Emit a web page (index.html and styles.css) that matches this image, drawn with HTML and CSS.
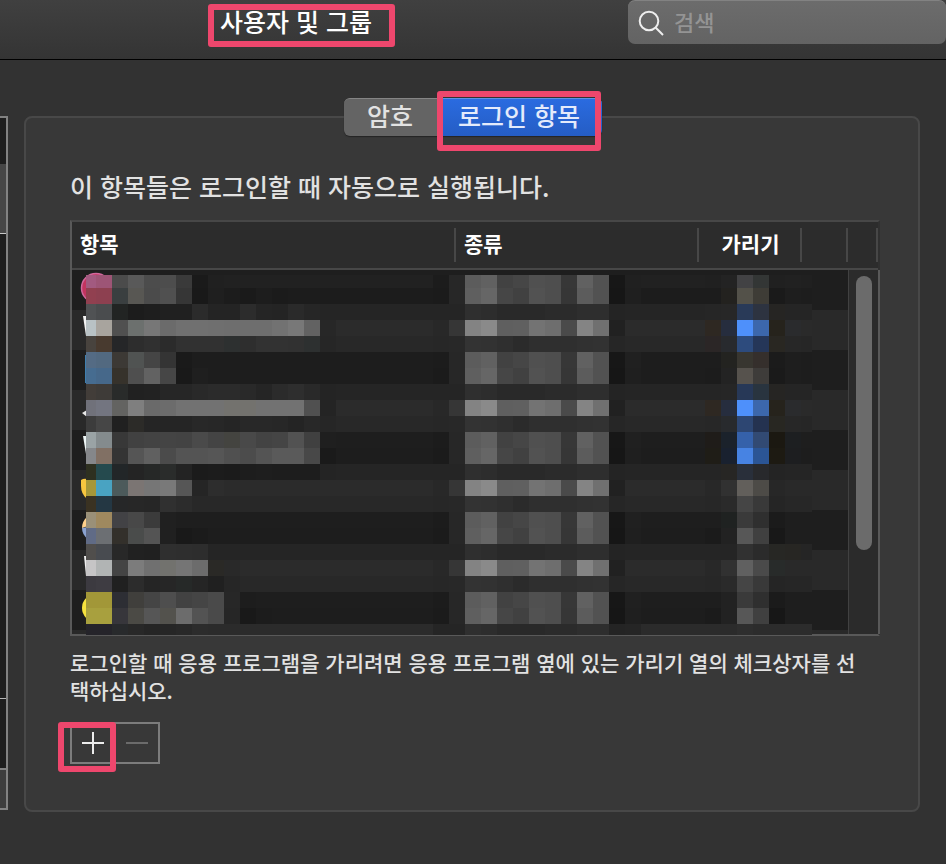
FILE: index.html
```html
<!DOCTYPE html>
<html lang="ko">
<head>
<meta charset="utf-8">
<title>사용자 및 그룹</title>
<link rel="stylesheet" href="styles.css">
</head>
<body>
<header class="toolbar">
  <h1 class="title marked">사용자 및 그룹</h1>
  <label class="search">
    <svg class="search-icon" viewBox="0 0 26 26" aria-hidden="true"><circle cx="11" cy="11" r="9.3"/><path d="M17.8 17.8 25 25"/></svg>
    <input type="search" placeholder="검색" aria-label="검색">
  </label>
</header>
<main class="content">
  <aside class="accounts">
    <div class="account current"></div>
    <div class="account-list"></div>
    <div class="account-options"></div>
    <div class="account-lock"></div>
  </aside>
  <section class="panel">
    <div class="tabs">
      <button type="button" class="tab">암호</button>
      <button type="button" class="tab active">로그인 항목<span class="mark mark-tab"></span></button>
    </div>
    <p class="lead">이 항목들은 로그인할 때 자동으로 실행됩니다.</p>
    <div class="list">
      <table class="items">
        <colgroup><col><col class="col-kind"><col class="col-hide"><col class="col-extra"><col class="col-scroll"></colgroup>
        <thead><tr><th>항목</th><th>종류</th><th class="center">가리기</th><th></th><th></th></tr></thead>
        <tbody>
          <tr><td colspan="5"></td></tr><tr><td colspan="5"></td></tr><tr><td colspan="5"></td></tr>
          <tr><td colspan="5"></td></tr><tr><td colspan="5"></td></tr><tr><td colspan="5"></td></tr>
          <tr><td colspan="5"></td></tr><tr><td colspan="5"></td></tr><tr><td colspan="5"></td></tr>
          <tr class="partial"><td colspan="5"></td></tr>
        </tbody>
      </table>
      <svg class="mosaic" viewBox="72 270 776 364" shape-rendering="crispEdges" aria-hidden="true">
        <g shape-rendering="auto">
          <circle cx="96" cy="288" r="14.5" fill="#c3345f" stroke="#d0699d" stroke-width="1.5"/>
          <path d="M83 316h4v20h-1z" fill="#f3f3f3"/>
          <path d="M85 355h3v28h-3z" fill="#3f7fae"/>
          <path d="M82 413l5-3v7z" fill="#e8e8e8"/>
          <path d="M83 436h4v18h-1z" fill="#edf5f5"/>
          <path d="M81 480q3-2 6-1v20q-6-5-6-13z" fill="#f8c63f"/>
          <path d="M88 516q-6 5-6 12l6-2z" fill="#ffd08a"/>
          <path d="M82 528q0 7 6 11v-12z" fill="#8aa2d0"/>
          <path d="M84 556h3v20h-1z" fill="#eee"/>
          <circle cx="96" cy="608" r="14" fill="#f6e23e"/>
        </g>
        <g id="blocks"></g>
      </svg>
      <div class="scrollbar"><div class="thumb"></div></div>
    </div>
    <p class="hint">로그인할 때 응용 프로그램을 가리려면 응용 프로그램 옆에 있는 가리기 열의 체크상자를 선택하십시오.</p>
    <div class="actions">
      <button type="button" class="action" aria-label="추가"><svg viewBox="0 0 22 22"><path d="M0 11h22M11 0v22"/></svg><span class="mark mark-add"></span></button>
      <button type="button" class="action" aria-label="제거" disabled><svg viewBox="0 0 22 22"><path d="M0 11h22"/></svg></button>
    </div>
  </section>
</main>
<script src="mosaic.js"></script>
</body>
</html>
```
FILE: styles.css
```css
* { box-sizing: border-box; }

body {
  margin: 0;
  min-height: 100vh;
  background: #323232;
  color: #e2e2e2;
  font-family: "Noto Sans CJK KR", sans-serif;
  font-weight: 500;
  overflow-x: hidden;
}

button, input { font: inherit; color: inherit; }

.toolbar {
  display: flex;
  align-items: flex-start;
  height: 60px;
  background: linear-gradient(#404040, #343434);
  border-bottom: 1px solid #000;
}

.title {
  margin: 4px 0 0 208px;
  width: 187px;
  height: 43px;
  padding-left: 6px;
  font-size: 25px;
  line-height: 22px;
  font-weight: 500;
  color: #fff;
  white-space: nowrap;
}

.marked {
  border: 6px solid #ee476d;
  border-radius: 3px;
}

.mark {
  position: absolute;
  border: 6px solid #ee476d;
  border-radius: 3px;
  pointer-events: none;
}

.search {
  flex: 1;
  display: flex;
  align-items: center;
  gap: 10px;
  height: 44px;
  margin-left: 233px;
  padding: 0 12px 0 10px;
  border-top: 1px solid #828282;
  border-radius: 7px;
  background: linear-gradient(#6c6c6c, #636363);
}

.search-icon {
  flex: none;
  width: 26px;
  height: 26px;
  fill: none;
  stroke: #eee;
  stroke-width: 2;
}

.search input {
  flex: 1;
  min-width: 0;
  height: 36px;
  padding: 0 0 4px;
  border: 0;
  outline: 0;
  background: none;
  font-size: 22px;
  line-height: 32px;
}

.search input::placeholder { color: #949494; opacity: 1; }

.content {
  display: flex;
  align-items: flex-start;
  gap: 16px;
  padding: 56px 26px 52px 0;
}

.accounts {
  flex: none;
  width: 8px;
  border: 2px solid #828282;
  border-left: 0;
  background: #1e1e1e;
}

.account {
  height: 116px;
  padding-top: 46px;
  border-bottom: 1px solid #c8c8c8;
  background: #464646 content-box;
}

.account-list { height: 464px; }
.account-options { height: 72px; border-top: 1px solid #b4b4b4; border-bottom: 2px solid #828282; }
.account-lock { height: 38px; background: #3d3d3d; }

.panel {
  flex: 1;
  min-width: 0;
  padding: 0 38px 46px 44px;
  border: 2px solid #484848;
  border-radius: 8px;
  background: #383838;
}

.tabs {
  display: flex;
  justify-content: center;
  margin: -20px -38px 0 -42px;
}

.tab {
  position: relative;
  width: 94px;
  height: 38px;
  padding: 0 2px 6px 0;
  border: 0;
  border-top: 1px solid #858585;
  border-radius: 6px 0 0 6px;
  background: #646464;
  box-shadow: 0 1px 1px #242424;
  font-size: 25px;
  line-height: 30px;
}

.tab.active {
  width: 164px;
  border-top-color: #5f91e6;
  border-radius: 0 6px 6px 0;
  background: linear-gradient(#2a6be0, #255dc4);
  color: #e4ebfb;
}

.mark-tab { inset: -8px 1px -15px -1px; }

.lead {
  margin: 32px 0 16px;
  font-size: 25px;
  line-height: 36px;
}

.list {
  position: relative;
  border: 2px solid #595959;
  border-top-color: #474747;
  border-right-color: #303030;
  background: #2c2c2c;
}

.items {
  width: 100%;
  table-layout: fixed;
  border-collapse: separate;
  border-spacing: 0;
}

.col-kind { width: 243px; }
.col-hide { width: 103px; }
.col-extra { width: 46px; }
.col-scroll { width: 30px; }

.items th {
  height: 48px;
  padding: 0 8px 4px;
  border-bottom: 2px solid #474747;
  background: linear-gradient(#474747, #474747) right 6px / 2px 34px no-repeat;
  color: #fff;
  font-size: 21px;
  line-height: 30px;
  font-weight: 700;
  text-align: left;
}

.items th.center { text-align: center; }
.items td { height: 40px; padding: 0; background: #1e1e1e; }
.items tr:nth-child(even) td { background: #292929; }
.items tr.partial td { height: 4px; }

.mosaic {
  position: absolute;
  left: 0;
  top: 48px;
  width: 776px;
  height: 364px;
  overflow: visible;
}

.scrollbar {
  position: absolute;
  top: 48px;
  right: -2px;
  bottom: 0;
  width: 32px;
  padding: 6px 6px 0;
  border-left: 1px solid #414141;
  border-right: 2px solid #595959;
  background: #2b2b2b;
}

.thumb {
  width: 16px;
  height: 274px;
  margin-left: 1px;
  border-radius: 8px;
  background: #6b6b6b;
}

.hint {
  margin: 12px 0 18px;
  padding-right: 16px;
  font-size: 21px;
  line-height: 28px;
}

.actions {
  display: flex;
  width: 90px;
  height: 42px;
  border: 2px solid #7c7c7c;
}

.action {
  position: relative;
  flex: 1;
  display: flex;
  align-items: center;
  justify-content: center;
  padding: 0;
  border: 0;
  background: none;
}

.action + .action { border-left: 2px solid #7c7c7c; }

.action svg {
  width: 22px;
  height: 22px;
  fill: none;
  stroke: #ececec;
  stroke-width: 2;
}

.action:disabled svg { stroke: #6b6b6b; }
.mark-add { z-index: 1; inset: -2px -2px -10px -14px; }
```
FILE: mosaic.js
```js
// Colours are two-digit greys or six-digit hex values.
const base = "21 1c 25 2b 28 1d 1d 25 2b 28 1e 1d 25 2b 28 1e 1d 25 2b 28 1e 1d 2b".split(" ");

const names = [
  "a25a80 9d5576 4b 59 4c 4d 3a 1a 20",
  "914050 8d4050 3a3f40 585753 4b 50 36 19 1f 1c 1a 1d 1b",
  "505254 4a4c4e 222423 1c 1e 20 20 2b 24 24 2c 25 24 2a 26 25",
  "b9c2c5 a8a49e 50 6c706e 77 6b 70 70 6f 6e 6e 6e 72 78 62 27",
  "48433e 483a2f 252628 2d 30 2b 31 31 31 2d3030 2e 32 32 31 2d3030 26",
  "546b84 526980 3c3935 505352 45 34 1a 1d",
  "466c90 46688a 36322b 4f 62 46 19 1f 1d",
  "423d39 3e3b38 292b2a 21 22 26 26 29 2b 2b 29 25 2b 2e 29 24",
  "70717a 737580 636361 7f 6a 6c 72 72 72 73726e 73726e 72 72 72 50 24",
  "3c 46 20 2c2b28 25 25 25 28 27 25 28 28 27 24 28 26",
  "9aa3a5 848b8d 38 41 43 44 43 4a 44 444440 49 43 45 52 40 1f",
  "85878a 817064 34 55 60 4b 54 54 56 50 4c 54 5a 5a 48 1a",
  "2e3020 254a4e 222628 24 262827 2a2c2b 23 1b 1c 1b 1d 1e 1d 1d 1d 24",
  "a69739 49a3c2 4c5a5b 7b7573 76 79 56 25 2d 2b",
  "3a3222 243743 262728 27 26 30 2c 28",
  "9a9078 9f895f 424245 48 3b 20 1e",
  "606b86 6c6f73 33302b 4a4c4b 54 20 19 1b",
  "504e4c 484b50 28 21 20 2f 2e 2d",
  "c6c5c6 b1b4b4 44 7c 70 72726e 75 6c 2a2926 29",
  "3c3a40 3e3c42 20 2c 25 26 262928 25 20 26",
  "a29738 a29738 2d2e34 403f3c 45 4e 42 45 4a 27 1d",
  "a8a03e a8a03e 37363b 4b4a45 56 53524d 6c 53 4a 26 19 1c",
  "25242a 25242a 282a2c 28 25 26 28 2c"
].map(s => s.split(" "));

// The second column repeats every five bands.
const kinds = [
  "1c 27 5c 61 42 46 50 4e 37 61 52 17 20",
  "1b 27 5f 66 46 41 52 4e 36 5c 52 16 1f",
  "25 25 2f 2d 29 29 29 2b 2b 2e 2e 24 25",
  "28 36 83 8a 5f 60 73 6e 4a 84 70 21 2b",
  "27 28 33 32 2f 2b 2f 2f 2f 31 32 26 28"
].map(s => s.split(" "));

const hides = [
  "20 23 424244 333635 20 21 20",
  "1c 23221f 535149 3e3c36 1a 1e 1d",
  "26 27 293a58 2d3340 262523 25 25",
  "2e2822 262d3e 4e90fb 3c67ac 26231c 2a2b2d 2a",
  "2b2626 282a2e 2d4b7d 253658 292722 27 26",
  "1d 232320 383630 352f2c 1b 1e 1d",
  "1c 23 56524d 3e3c3a 1a 1e 1d",
  "25 26 273857 29343f 262523 25 25",
  "2e2822 262d3e 4e90fb 3c67ac 26231c 2a2b2d 2a",
  "27 282a2d 2d4672 243250 282722 27 26",
  "1f1c19 1b222b 3561aa 324a73 1b1811 1d1f21 1e",
  "1f1d17 19212f 4783e3 2b5595 1d1a12 1d1e20 1d",
  "25 272624 292f3a 28292c 24 25 25",
  "28 31 625f5b 4d4b47 27 29 29",
  "27 2a 45 39 25 27 27",
  "1e 1f2221 3a 2f 1b 1e 1e",
  "1b 22 57 40 18 1e 1e",
  "25 25 31 2b 272724 272623 25",
  "28 31 60 4a 282b2a 29 29",
  "27 2a 45 39 25 26 26",
  "1e 22 3a 2f 1b 1e 1e",
  "1b 22 57 40 17 1e 1e",
  "2b 2b 2e 2c 2c 2c 2c"
].map(s => s.split(" "));

const group = document.getElementById("blocks");
const END = 812;

function block(x, y, w, h, c) {
  const r = document.createElementNS("http://www.w3.org/2000/svg", "rect");
  r.setAttribute("x", x);
  r.setAttribute("y", y);
  r.setAttribute("width", Math.min(w, END - x));
  r.setAttribute("height", h);
  r.setAttribute("fill", "#" + (c.length === 2 ? c + c + c : c));
  group.appendChild(r);
}

base.forEach((shade, i) => {
  const y = i === 0 ? 275 : 272 + i * 16;
  const h = i === 0 ? 13 : i === 22 ? 11 : 16;
  block(86, y, END - 86, h, shade);
  names[i].forEach((c, n) => {
    if (n === 0) block(86, y, 10, h, c);
    else block(80 + n * 16, y, 16, h, c);
  });
  const kind = i === 22 ? kinds[2] : kinds[i % 5];
  kind.forEach((c, n) => block(433 + n * 16, y, 16, h, c));
  hides[i].forEach((c, n) => block(705 + n * 16, y, 16, h, c));
});
```
